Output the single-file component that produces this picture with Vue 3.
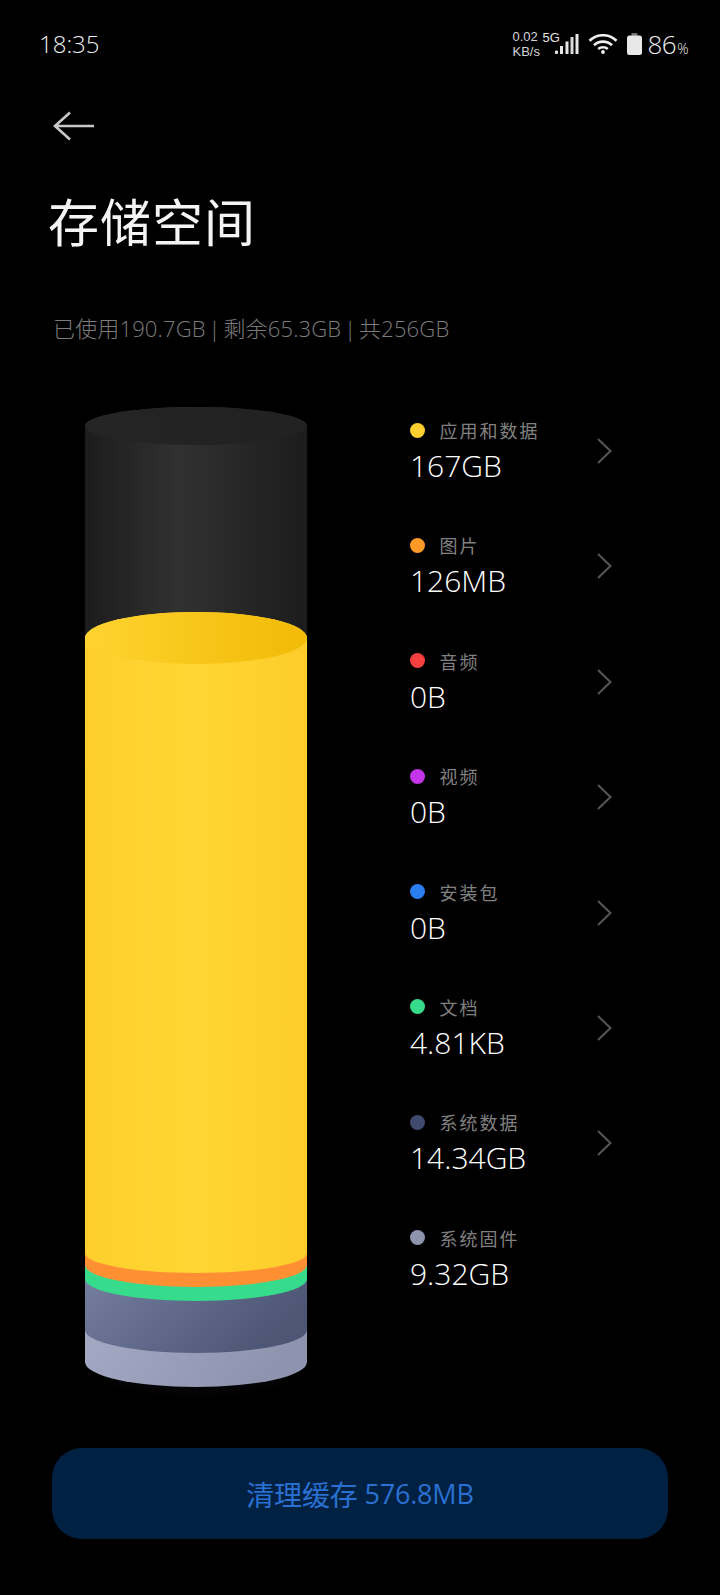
<script setup>
const items = [
  { name: '应用和数据', size: '167GB', color: '#ffd02f', arrow: true },
  { name: '图片', size: '126MB', color: '#ff9a26', arrow: true },
  { name: '音频', size: '0B', color: '#f5403f', arrow: true },
  { name: '视频', size: '0B', color: '#c434e8', arrow: true },
  { name: '安装包', size: '0B', color: '#2a7ef0', arrow: true },
  { name: '文档', size: '4.81KB', color: '#36dc8c', arrow: true },
  { name: '系统数据', size: '14.34GB', color: '#3f4a6e', arrow: true },
  { name: '系统固件', size: '9.32GB', color: '#8f94ae', arrow: false }
];
</script>

<template>
  <div class="page">
    <!-- status bar -->
    <div class="status">
      <span class="time">18:35</span>
      <div class="status-right">
        <div class="speed"><span>0.02</span><span>KB/s</span></div>
        <span class="net">5G</span>
        <svg class="signal" width="24" height="20" viewBox="0 0 24 20">
          <rect x="0" y="16.5" width="3" height="3.5" rx="1" fill="#e6e6e6" />
          <rect x="5" y="12" width="3" height="8" fill="#e6e6e6" />
          <rect x="10.5" y="7.5" width="3" height="12.5" fill="#e6e6e6" />
          <rect x="15.5" y="3" width="3" height="17" fill="#e6e6e6" opacity="0.95" />
          <rect x="20.5" y="0" width="3" height="20" fill="#e6e6e6" />
        </svg>
        <svg class="wifi" width="30" height="20" viewBox="0 0 30 20" fill="none" stroke="#f0f0f0" stroke-width="2.6">
          <path d="M1.5 6.8C9 -0.6 21 -0.6 28.5 6.8" />
          <path d="M6 11.2C11 6.4 19 6.4 24 11.2" />
          <path d="M10.2 15C12.9 12.6 17.1 12.6 19.8 15" />
          <circle cx="15" cy="18" r="1.9" fill="#f0f0f0" stroke="none" />
        </svg>
        <svg class="battery" width="15" height="22" viewBox="0 0 15 22">
          <path d="M4.5 0h6v3h-6z" fill="#6f6f6f" />
          <path d="M2.5 2.5h10a2.5 2.5 0 0 1 2.5 2.5v14.500a2.500 2.500 0 0 1-2.500 2.500h-10a2.500 2.500 0 0 1-2.500-2.500v-14.500a2.500 2.500 0 0 1 2.500-2.500z" fill="#e8e8e8" />
        </svg>
        <span class="level">86<small>%</small></span>
      </div>
    </div>

    <div class="nav">
      <svg width="42" height="30" viewBox="0 0 42 30" fill="none" stroke="#c8c8c8" stroke-width="2.600">
        <path d="M41 15H2M17 1.500L2 15l15 13.500" />
      </svg>
    </div>

    <h1 class="title">存储空间</h1>
    <p class="summary">已使用190.7GB | 剩余65.3GB | 共256GB</p>

    <div class="main">
      <!-- cylinder -->
      <svg class="tube" width="222" height="1000" viewBox="0 0 222 1000">
        <defs>
          <linearGradient id="shell" x1="0" x2="1" y1="0" y2="0">
            <stop offset="0" stop-color="#1c1c1c" />
            <stop offset="0.42" stop-color="#313131" />
            <stop offset="1" stop-color="#1c1c1c" />
          </linearGradient>
          <linearGradient id="lid" x1="0" x2="1" y1="0" y2="0">
            <stop offset="0" stop-color="#252525" />
            <stop offset="1" stop-color="#212121" />
          </linearGradient>
          <linearGradient id="yellowBody" x1="0" x2="1" y1="0" y2="0">
            <stop offset="0" stop-color="#fecf2d" />
            <stop offset="0.5" stop-color="#ffd633" />
            <stop offset="1" stop-color="#fdcd2a" />
          </linearGradient>
          <linearGradient id="yellowTop" x1="0" x2="1" y1="0" y2="0">
            <stop offset="0" stop-color="#ffd330" />
            <stop offset="1" stop-color="#f1ba05" />
          </linearGradient>
          <linearGradient id="slate" x1="0" x2="1" y1="0" y2="0.4">
            <stop offset="0" stop-color="#767fa0" />
            <stop offset="1" stop-color="#4d5675" />
          </linearGradient>
          <linearGradient id="lavender" x1="0" x2="1" y1="0" y2="0.3">
            <stop offset="0" stop-color="#a6abc6" />
            <stop offset="1" stop-color="#8f94ae" />
          </linearGradient>
          <radialGradient id="floor">
            <stop offset="0" stop-color="#0d0d12" />
            <stop offset="1" stop-color="#000000" />
          </radialGradient>
        </defs>
        <ellipse cx="111" cy="978" rx="104" ry="20" fill="url(#floor)" />
        <path d="M0 26A111 19 0 0 1 222 26V240H0Z" fill="url(#shell)" />
        <ellipse cx="111" cy="26" rx="111" ry="19" fill="url(#lid)" />
        <path d="M0 962A111 25 0 0 0 222 962V900H0Z" fill="url(#lavender)" />
        <path d="M0 930A111 23 0 0 0 222 930V870H0Z" fill="url(#slate)" />
        <path d="M0 879A111 22 0 0 0 222 879V840H0Z" fill="#36dc8c" />
        <path d="M0 865A111 22 0 0 0 222 865V830H0Z" fill="#ff8f33" />
        <path d="M0 238A111 26 0 0 1 222 238V853A111 20 0 0 1 0 853Z" fill="url(#yellowBody)" />
        <ellipse cx="111" cy="238" rx="111" ry="26" fill="url(#yellowTop)" />
      </svg>

      <ul class="list">
        <li v-for="item in items" :key="item.name" class="row">
          <div class="info">
            <div class="label">
              <i class="dot" :style="{ background: item.color }"></i>
              <span>{{ item.name }}</span>
            </div>
            <div class="size">{{ item.size }}</div>
          </div>
          <svg v-if="item.arrow" width="15" height="26" viewBox="0 0 15 26" fill="none" stroke="#565656" stroke-width="2">
            <path d="M1 1l12.500 12L1 25" />
          </svg>
        </li>
      </ul>
    </div>

    <div class="clean"><span class="clean-name">清理缓存</span> <span>576.8MB</span></div>
  </div>
</template>

<style>
html,
body {
  margin: 0;
  background: #000;
}
</style>

<style scoped>
.page {
  width: 720px;
  height: 1595px;
  overflow: hidden;
  background: #000;
  color: #fff;
  font-family: "Open Sans", "Noto Sans CJK SC", sans-serif;
}

.status {
  box-sizing: border-box;
  height: 90px;
  display: flex;
  align-items: center;
  justify-content: space-between;
  padding: 0 32px 2px 39px;
}

.time {
  font-size: 24px;
  font-weight: 300;
  color: #eee;
  margin-bottom: 2px;
}

.status-right {
  display: flex;
  align-items: center;
}

.speed {
  display: flex;
  flex-direction: column;
  width: 28px;
  font-family: "Liberation Sans", sans-serif;
  font-size: 13px;
  line-height: 15px;
  color: #d4d4d4;
}

.net {
  font-family: "Liberation Sans", sans-serif;
  font-size: 13px;
  color: #e4e4e4;
  margin: -14px 0 0 2px;
  width: 12px;
  white-space: nowrap;
}

.signal {
  margin-left: 0;
}

.wifi {
  margin-left: 9px;
}

.battery {
  margin-left: 9px;
}

.level {
  margin-left: 6px;
  font-size: 26px;
  font-weight: 300;
  color: #eee;
  letter-spacing: -0.5px;
}

.level small {
  font-size: 14px;
  margin-left: 1px;
}

.nav {
  height: 72px;
  padding-left: 53px;
  display: flex;
  align-items: center;
}

.title {
  margin: 24px 0 0 48px;
  font-size: 51px;
  font-weight: 400;
  line-height: 72px;
  letter-spacing: 1px;
  color: #f4f4f4;
}

.summary {
  margin: 55px 0 0 53px;
  font-size: 22px;
  line-height: 30px;
  font-weight: 300;
  letter-spacing: 0.15px;
  word-spacing: -3px;
  color: #7c7c7c;
}

.main {
  margin-top: 57px;
  height: 1000px;
  display: flex;
  padding-left: 85px;
}

.tube {
  flex: none;
}

.list {
  list-style: none;
  margin: 15px 0 0 103px;
  padding: 0;
}

.row {
  height: 72px;
  margin-bottom: 43.4px;
  display: flex;
  align-items: center;
}

.info {
  width: 187px;
}

.label {
  height: 30px;
  display: flex;
  align-items: center;
  font-size: 18px;
  letter-spacing: 2px;
  color: #808080;
}

.dot {
  width: 15px;
  height: 15px;
  border-radius: 50%;
  margin-right: 14.500px;
}

.size {
  height: 42px;
  line-height: 42px;
  font-size: 30px;
  font-weight: 300;
  color: #fff;
}

.clean {
  margin: 48px 0 0 52px;
  width: 616px;
  height: 91px;
  border-radius: 30px;
  background: #002142;
  color: #2a70d2;
  font-size: 27px;
  letter-spacing: -0.2px;
  display: flex;
  align-items: center;
  justify-content: center;
  gap: 7px;
}

.clean-name {
  font-size: 28px;
}
</style>
